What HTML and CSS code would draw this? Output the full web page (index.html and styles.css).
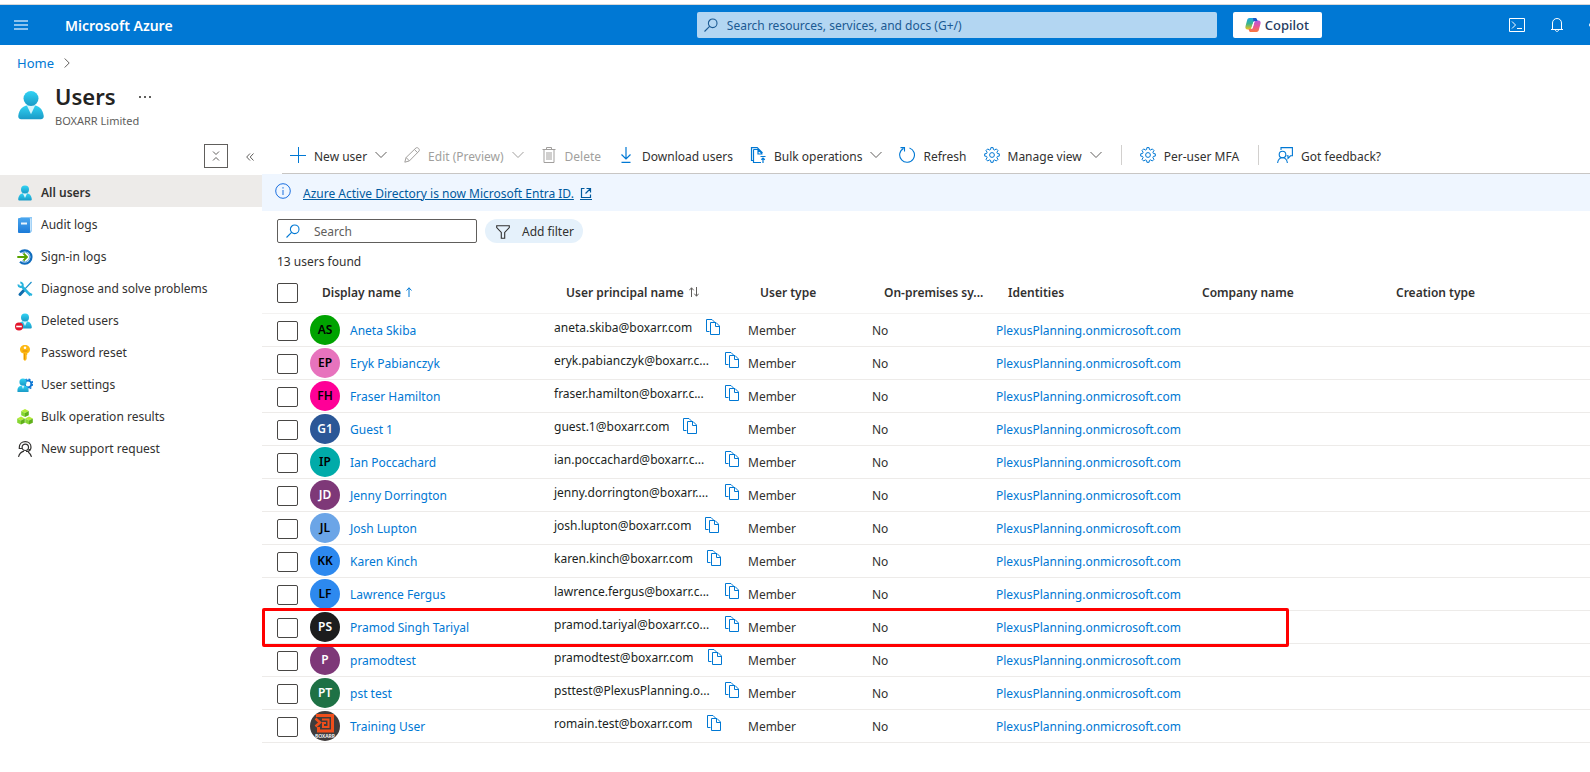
FILE: index.html
```html
<!DOCTYPE html>
<html lang="en">
<head>
    <meta charset="utf-8"/>
    <title>Users - Microsoft Azure</title>
    <link rel="stylesheet" href="styles.css">
</head>
<body>
<!-- shared icons -->
<svg class="defs" width="0" height="0">
    <defs>
        <linearGradient id="g-user" x1="0" y1="0" x2="0" y2="1">
            <stop offset="0" stop-color="#32d4f5"/><stop offset="1" stop-color="#1a9ac6"/>
        </linearGradient>
        <linearGradient id="g-blue" x1="0" y1="0" x2="0" y2="1">
            <stop offset="0" stop-color="#4aa6ee"/><stop offset="1" stop-color="#1b7ad8"/>
        </linearGradient>
        <linearGradient id="g-cop1" x1="0" y1="0" x2="0" y2="1">
            <stop offset="0" stop-color="#16a5e8"/><stop offset="0.5" stop-color="#3bb58a"/><stop offset="1" stop-color="#f4c11b"/>
        </linearGradient>
        <linearGradient id="g-cop2" x1="0" y1="0" x2="0" y2="1">
            <stop offset="0" stop-color="#b159e0"/><stop offset="0.5" stop-color="#e5559b"/><stop offset="1" stop-color="#fb7a3c"/>
        </linearGradient>
    </defs>
    <symbol id="i-user" viewBox="0 0 16 16">
        <path fill="url(#g-user)" d="M2.8 15.6C1.700 15.600 1.100 14.900 1.200 13.900C1.700 10.200 3.500 8 8 8s6.300 2.200 6.800 5.900c.1 1-.5 1.700-1.600 1.700z"/>
        <path fill="#d9f5fc" d="M5.800 8.200L8 12.900l2.200-4.700C8.800 7.800 7.200 7.800 5.800 8.200z"/>
        <circle cx="8" cy="4.500" r="4" fill="url(#g-user)"/>
    </symbol>
    <symbol id="i-chev" viewBox="0 0 12 12">
        <path fill="none" stroke="currentColor" d="M.5 3L6 8.500L11.500 3"/>
    </symbol>
    <symbol id="i-search" viewBox="0 0 16 16">
        <circle cx="9.700" cy="6.300" r="4.300" fill="none" stroke="currentColor" stroke-width="1.100"/>
        <path stroke="currentColor" stroke-width="1.100" d="M6.600 9.400L1.500 14.500"/>
    </symbol>
    <symbol id="i-gear" viewBox="0 0 16 16">
        <path fill="none" stroke="currentColor" stroke-linejoin="round" d="M6.900 .6h2.200l.3 1.900 1.300.5 1.600-1.100 1.700 1.700-1.100 1.600.5 1.300 1.900.3v2.300l-1.900.3-.5 1.300 1.100 1.600-1.700 1.700-1.600-1.100-1.300.5-.3 1.900H6.900l-.3-1.900-1.300-.5L3.700 14 2 12.300l1.100-1.600-.5-1.300L.7 9.100V6.800l1.900-.3.500-1.300L2 3.600l1.700-1.700L5.300 3l1.300-.5z"/>
        <circle cx="8" cy="8" r="2.400" fill="none" stroke="currentColor"/>
    </symbol>
    <symbol id="i-copy" viewBox="0 0 14 16">
        <path fill="none" stroke="currentColor" d="M3.500 12.500H.5V.5h5.500l3 3M4.500 3.500v12h9V7l-3.500-3.500zM9.500 3.500v4h4"/>
    </symbol>
</svg>

<header class="topbar">
    <button class="burger" aria-label="Menu">
        <svg width="14" height="10" viewBox="0 0 14 10"><path stroke="#8cc2ee" stroke-width="2" d="M0 1h14M0 5h14M0 9h14"/></svg>
    </button>
    <a class="brand" href="#">Microsoft Azure</a>
    <label class="topsearch">
        <svg width="16" height="16"><use href="#i-search"/></svg>
        <input type="text" placeholder="Search resources, services, and docs (G+/)" aria-label="Search resources">
    </label>
    <button class="copilot">
        <svg width="16" height="16" viewBox="0 0 16 16">
            <path fill="url(#g-cop1)" d="M4.500 1h5.700c.9 0 1.500.6 1.800 1.600L12.500 4H10c-1 0-1.500.6-1.800 1.500L6.600 11c-.3 1-.9 1.500-1.900 1.500H2.500C.8 12.500 0 11 .5 9.200l1.600-6C2.500 1.800 3.300 1 4.500 1z"/>
            <path fill="url(#g-cop2)" d="M11.500 15H5.800c-.9 0-1.500-.6-1.800-1.600L3.500 12H6c1 0 1.500-.6 1.800-1.500L9.400 5c.3-1 .9-1.500 1.900-1.500h2.200c1.700 0 2.500 1.500 2 3.300l-1.600 6c-.4 1.400-1.200 2.200-2.400 2.200z"/>
            <path fill="#1b55c9" d="M8 1h2.200c.9 0 1.500.6 1.800 1.600l.5 1.400H10c-.8 0-1.200.3-1.500.8z"/>
            <path fill="#fff" d="M8.500 4.800h1L7.700 11c-.1.300-.3.500-.5.500h-1z"/>
        </svg>
        Copilot
    </button>
    <div class="tools">
        <button aria-label="Cloud Shell">
            <svg width="16" height="14" viewBox="0 0 16 14"><path fill="none" stroke="#fff" d="M.5.5h15v13H.5zM3 3.500L6.500 7L3 10.500M8 10.500h5"/></svg>
        </button>
        <button aria-label="Notifications">
            <svg width="12" height="14" viewBox="0 0 12 14"><path fill="none" stroke="#fff" d="M0 11.500h12M1.500 11.500V5C1.500 2.300 3.500.5 6 .5S10.500 2.300 10.500 5v6.500M4.300 11.700C4.500 14 7.500 14 7.700 11.700"/></svg>
        </button>
        <button aria-label="Settings"><svg class="white" width="16" height="16"><use href="#i-gear"/></svg></button>
    </div>
</header>

<nav class="crumbs">
    <a href="#">Home</a>
    <svg width="6" height="10" viewBox="0 0 6 10"><path fill="none" stroke="#605e5c" d="M.7.5L5.200 5L.7 9.500"/></svg>
</nav>

<div class="title">
    <svg width="30" height="30"><use href="#i-user"/></svg>
    <div>
        <h1>Users</h1>
        <p>BOXARR Limited</p>
    </div>
    <button class="more" aria-label="More"><svg width="12" height="2" viewBox="0 0 12 2"><path fill="#605e5c" d="M0 0h2v2H0zM5 0h2v2H5zM10 0h2v2h-2z"/></svg></button>
</div>

<div class="page">
    <aside class="side">
        <div class="side-tools">
            <button class="boxed" aria-label="Collapse all">
                <svg width="8" height="10" viewBox="0 0 8 10"><path fill="none" stroke="#605e5c" d="M1 .5L4 3.500L7 .5M1 9.500L4 6.500L7 9.500"/></svg>
            </button>
            <button aria-label="Hide menu">
                <svg width="8" height="8" viewBox="0 0 8 8"><path fill="none" stroke="#605e5c" d="M4 .5L.7 4L4 7.500M7.500 .5L4.200 4L7.500 7.500"/></svg>
            </button>
        </div>
        <ul>
            <li class="on"><a href="#"><svg width="16" height="16"><use href="#i-user"/></svg>All users</a></li>
            <li><a href="#"><svg width="16" height="16" viewBox="0 0 16 16"><path fill="#8ec8f5" d="M3.500 0H15v14l-1.500 2H3z"/><path fill="#fff" d="M13.500 1.500h.7v12h-.7z"/><rect x="1" y="1" width="12" height="15" rx="1" fill="url(#g-blue)"/><path fill="#e8f4fd" d="M4 5.500h6v2H4z"/></svg>Audit logs</a></li>
            <li><a href="#"><svg width="16" height="16" viewBox="0 0 16 16"><path fill="none" stroke="#0f6cbd" stroke-width="2.200" d="M3 3.300A6.700 6.700 0 1 1 3 12.700"/><path fill="none" stroke="#5ea0d8" stroke-width="1" d="M5 4.200A4.800 4.800 0 1 1 5 11.800"/><path fill="none" stroke="#57a300" stroke-width="1.800" d="M.3 8h9.200M6.500 4.500L10 8l-3.500 3.500"/></svg>Sign-in logs</a></li>
            <li><a href="#"><svg width="16" height="16" viewBox="0 0 16 16"><path fill="none" stroke="#1c8fc9" stroke-width="1.200" d="M14.500 1L8 7.800"/><path fill="none" stroke="#0f6cad" stroke-width="3" stroke-linecap="round" d="M7.200 9L3 13.500"/><path fill="none" stroke="#27b4de" stroke-width="2.600" d="M4.500 5L13.500 14.300"/><path fill="none" stroke="#27b4de" stroke-width="2" d="M1.300 3.500C1.500 6 4.500 6.500 5.500 5S5 1.500 3.300 1.500M12 12.500l3 1.500"/></svg>Diagnose and solve problems</a></li>
            <li><a href="#"><svg width="16" height="16" viewBox="0 0 16 16" overflow="visible"><use href="#i-user" width="16" height="16"/><circle cx="2" cy="13.500" r="4" fill="#e3142b"/><path fill="#fff" d="M-.8 12.700h5.600v1.600H-.8z"/></svg>Deleted users</a></li>
            <li><a href="#"><svg width="16" height="16" viewBox="0 0 16 16"><path fill="#fdb813" d="M8 0c2.900 0 5 1.900 5 4.500 0 2-1.100 3.200-2.800 4V10l-1 .9 1 1-1 1 .8.9L8 16l-1.600-1.500v-6C4.500 8 3 6.700 3 4.500 3 1.900 5.100 0 8 0z"/><circle cx="8" cy="2.800" r="1.300" fill="#fff"/><path fill="#e08a00" d="M5.500 5.500h5v.9h-5zM7.200 8.500h.8v6h-.8z"/></svg>Password reset</a></li>
            <li><a href="#"><svg width="16" height="16" viewBox="0 0 16 16"><circle cx="11" cy="7" r="3.400" fill="none" stroke="#0f78d4" stroke-width="2"/><circle cx="11" cy="7" r="4.800" fill="none" stroke="#0f78d4" stroke-width="1.600" stroke-dasharray="1.900 1.870"/><path fill="url(#g-user)" d="M.5 15C0 11 1.500 8.500 6 8.500s6 2.500 5.500 6.500z"/><path fill="#d9f5fc" d="M4.500 8.600L6 12l1.500-3.400z"/><circle cx="6" cy="5" r="3.600" fill="url(#g-user)"/></svg>User settings</a></li>
            <li><a href="#"><svg width="16" height="16" viewBox="0 0 16 16"><path fill="#b4ec36" d="M8 0l3.800 2L8 4 4.200 2zM4 7.500l3.800 2L4 11.500l-3.800-2zM12 7.500l3.800 2-3.800 2-3.800-2z"/><path fill="#86d633" d="M4.200 2L8 4v4L4.200 6.200zM.2 9.500l3.800 2v4L.2 13.700zM8.200 9.500l3.800 2v4l-3.800-1.800z"/><path fill="#5fb01a" d="M11.800 2L8 4v4l3.800-1.800zM7.800 9.500l-3.800 2v4l3.800-1.800zM15.800 9.500l-3.800 2v4l3.800-1.800z"/></svg>Bulk operation results</a></li>
            <li><a href="#"><svg width="16" height="16" viewBox="0 0 16 16"><g fill="none" stroke="#323130" stroke-width="1.200"><circle cx="8.300" cy="6.300" r="3.200"/><path d="M2.300 8V6.500C2.300 3 5 .7 8.300 .7s5.700 2.300 5.700 5.500c0 2.500-1.500 4.300-5 4.300M1.500 15.800C2.500 12.500 4.500 10.800 7 10.200M14.500 15.800c-.6-2-1.700-3.700-3.300-4.900M2.300 7.500H5M11.500 8.500h2"/></g></svg>New support request</a></li>
        </ul>
    </aside>

    <main class="main">
        <div class="cmdbar">
            <button><svg width="16" height="16" viewBox="0 0 16 16"><path stroke="currentColor" d="M0 8.500h16M8.500 0v16"/></svg>New user<svg class="chev" width="12" height="12"><use href="#i-chev"/></svg></button>
            <button disabled><svg width="16" height="16" viewBox="0 0 16 16"><path fill="none" stroke="currentColor" d="M.8 15.200l1.300-4.700L12 .9c1.700-1 4.100 1.300 3.100 3.100L5.400 13.900zM10.400 2.500l3.200 3.200M2.100 10.500l3.300 3.400"/></svg>Edit (Preview)<svg class="chev" width="12" height="12"><use href="#i-chev"/></svg></button>
            <button disabled><svg width="16" height="16" viewBox="0 0 16 16"><path fill="none" stroke="currentColor" d="M1.500 2.500h13M5.500 2.500v-2h5v2M3 2.500v13h10v-13M6 5v8M8 5v8M10 5v8"/></svg>Delete</button>
            <button><svg width="16" height="16" viewBox="0 0 16 16"><path fill="none" stroke="currentColor" stroke-width="1.200" d="M8 0v12M3.500 7.500L8 12l4.500-4.500M3.500 15.400h9"/></svg>Download users</button>
            <button><svg width="16" height="16" viewBox="0 0 16 16"><path fill="none" stroke="currentColor" stroke-width="1.200" d="M3 13.500H1.500V.6h5.700L12.500 6M3.500 2.500v13h7.500M3.500 2.500H8l4 4M8 2.500v4.500h4.500M10.500 9.500h5M13 16v-5M11.300 12.700L13 11l1.800 1.700"/></svg>Bulk operations<svg class="chev" width="12" height="12"><use href="#i-chev"/></svg></button>
            <button><svg width="16" height="16" viewBox="0 0 16 16"><path fill="none" stroke="currentColor" stroke-width="1.100" d="M10.500 .9A7.400 7.400 0 1 1 4.500 1.400M1.500 .6h4v4"/></svg>Refresh</button>
            <button><svg width="16" height="16"><use href="#i-gear"/></svg>Manage view<svg class="chev" width="12" height="12"><use href="#i-chev"/></svg></button>
            <span class="sep"></span>
            <button><svg width="16" height="16"><use href="#i-gear"/></svg>Per-user MFA</button>
            <span class="sep"></span>
            <button><svg width="16" height="16" viewBox="0 0 16 16"><g fill="none" stroke="currentColor" stroke-width="1.100"><circle cx="5.500" cy="7.500" r="3.300"/><path d="M.6 16c.4-3 2.300-5.200 4.900-5.200S10 13 10.400 16M4 3V.6h11.400v8.200h-1.900l-2.500 2.500V8.800H9.500"/></g></svg>Got feedback?</button>
        </div>

        <div class="banner">
            <svg width="16" height="16" viewBox="0 0 16 16"><circle cx="8" cy="8" r="7.300" fill="none" stroke="#1a6fe0"/><path fill="#1a6fe0" d="M7.500 7h1v5h-1zM7.400 4.200h1.200v1.300H7.400z"/></svg>
            <a href="#">Azure Active Directory is now Microsoft Entra ID.</a>
            <a class="ext" href="#" aria-label="Open"><svg width="12" height="12" viewBox="0 0 12 12"><path fill="none" stroke="currentColor" stroke-width="1.200" d="M4.500 1.500h-3v9h9v-3M6.500 1.500h4v4M10.500 1.500L5.500 6.500"/></svg></a>
        </div>

        <div class="filters">
            <label class="search">
                <svg width="16" height="16"><use href="#i-search"/></svg>
                <input type="text" placeholder="Search" aria-label="Search users">
            </label>
            <button class="pill">
                <svg width="14" height="14" viewBox="0 0 14 14"><path fill="none" stroke="#323130" stroke-width="1.100" d="M.7 .8h12.600v1.700L8.700 7.500v5.700H5.300V7.500L.7 2.500z"/></svg>
                Add filter
            </button>
        </div>

        <p class="count">13 users found</p>

        <table class="users">
            <colgroup>
                <col class="c-check"><col class="c-name"><col class="c-upn"><col class="c-type"><col class="c-sync"><col class="c-ident"><col class="c-comp"><col>
            </colgroup>
            <thead>
                <tr>
                    <th><input type="checkbox" aria-label="Select all"></th>
                    <th>Display name <svg class="asc" width="6" height="10" viewBox="0 0 6 10"><path fill="none" stroke="currentColor" d="M3 10V.8M.5 3.500L3 .8L5.500 3.500"/></svg></th>
                    <th>User principal name <svg width="10" height="10" viewBox="0 0 10 10"><path fill="none" stroke="currentColor" d="M2.500 10V.8M.3 3.300L2.500 .8L4.700 3.300M7.500 0v9.200M5.300 6.700L7.500 9.200L9.700 6.700"/></svg></th>
                    <th>User type</th>
                    <th>On-premises sy...</th>
                    <th>Identities</th>
                    <th>Company name</th>
                    <th>Creation type</th>
                </tr>
            </thead>
            <tbody>
                <tr>
                    <td><input type="checkbox" aria-label="Aneta Skiba"></td>
                    <td><div class="who"><span class="av green">AS</span><a href="#">Aneta Skiba</a></div></td>
                    <td><div class="upn"><span>aneta.skiba@boxarr.com</span><button aria-label="Copy"><svg width="14" height="16"><use href="#i-copy"/></svg></button></div></td>
                    <td>Member</td><td>No</td><td><a href="#">PlexusPlanning.onmicrosoft.com</a></td><td></td><td></td>
                </tr>
                <tr>
                    <td><input type="checkbox" aria-label="Eryk Pabianczyk"></td>
                    <td><div class="who"><span class="av pink">EP</span><a href="#">Eryk Pabianczyk</a></div></td>
                    <td><div class="upn cut"><span>eryk.pabianczyk@boxarr.c...</span><button aria-label="Copy"><svg width="14" height="16"><use href="#i-copy"/></svg></button></div></td>
                    <td>Member</td><td>No</td><td><a href="#">PlexusPlanning.onmicrosoft.com</a></td><td></td><td></td>
                </tr>
                <tr>
                    <td><input type="checkbox" aria-label="Fraser Hamilton"></td>
                    <td><div class="who"><span class="av magenta">FH</span><a href="#">Fraser Hamilton</a></div></td>
                    <td><div class="upn cut"><span>fraser.hamilton@boxarr.c...</span><button aria-label="Copy"><svg width="14" height="16"><use href="#i-copy"/></svg></button></div></td>
                    <td>Member</td><td>No</td><td><a href="#">PlexusPlanning.onmicrosoft.com</a></td><td></td><td></td>
                </tr>
                <tr>
                    <td><input type="checkbox" aria-label="Guest 1"></td>
                    <td><div class="who"><span class="av navy">G1</span><a href="#">Guest 1</a></div></td>
                    <td><div class="upn"><span>guest.1@boxarr.com</span><button aria-label="Copy"><svg width="14" height="16"><use href="#i-copy"/></svg></button></div></td>
                    <td>Member</td><td>No</td><td><a href="#">PlexusPlanning.onmicrosoft.com</a></td><td></td><td></td>
                </tr>
                <tr>
                    <td><input type="checkbox" aria-label="Ian Poccachard"></td>
                    <td><div class="who"><span class="av teal">IP</span><a href="#">Ian Poccachard</a></div></td>
                    <td><div class="upn cut"><span>ian.poccachard@boxarr.c...</span><button aria-label="Copy"><svg width="14" height="16"><use href="#i-copy"/></svg></button></div></td>
                    <td>Member</td><td>No</td><td><a href="#">PlexusPlanning.onmicrosoft.com</a></td><td></td><td></td>
                </tr>
                <tr>
                    <td><input type="checkbox" aria-label="Jenny Dorrington"></td>
                    <td><div class="who"><span class="av purple">JD</span><a href="#">Jenny Dorrington</a></div></td>
                    <td><div class="upn cut"><span>jenny.dorrington@boxarr....</span><button aria-label="Copy"><svg width="14" height="16"><use href="#i-copy"/></svg></button></div></td>
                    <td>Member</td><td>No</td><td><a href="#">PlexusPlanning.onmicrosoft.com</a></td><td></td><td></td>
                </tr>
                <tr>
                    <td><input type="checkbox" aria-label="Josh Lupton"></td>
                    <td><div class="who"><span class="av sky">JL</span><a href="#">Josh Lupton</a></div></td>
                    <td><div class="upn"><span>josh.lupton@boxarr.com</span><button aria-label="Copy"><svg width="14" height="16"><use href="#i-copy"/></svg></button></div></td>
                    <td>Member</td><td>No</td><td><a href="#">PlexusPlanning.onmicrosoft.com</a></td><td></td><td></td>
                </tr>
                <tr>
                    <td><input type="checkbox" aria-label="Karen Kinch"></td>
                    <td><div class="who"><span class="av blue">KK</span><a href="#">Karen Kinch</a></div></td>
                    <td><div class="upn"><span>karen.kinch@boxarr.com</span><button aria-label="Copy"><svg width="14" height="16"><use href="#i-copy"/></svg></button></div></td>
                    <td>Member</td><td>No</td><td><a href="#">PlexusPlanning.onmicrosoft.com</a></td><td></td><td></td>
                </tr>
                <tr>
                    <td><input type="checkbox" aria-label="Lawrence Fergus"></td>
                    <td><div class="who"><span class="av blue">LF</span><a href="#">Lawrence Fergus</a></div></td>
                    <td><div class="upn cut"><span>lawrence.fergus@boxarr.c...</span><button aria-label="Copy"><svg width="14" height="16"><use href="#i-copy"/></svg></button></div></td>
                    <td>Member</td><td>No</td><td><a href="#">PlexusPlanning.onmicrosoft.com</a></td><td></td><td></td>
                </tr>
                <tr class="marked">
                    <td><input type="checkbox" aria-label="Pramod Singh Tariyal"></td>
                    <td><div class="who"><span class="av black">PS</span><a href="#">Pramod Singh Tariyal</a></div></td>
                    <td><div class="upn cut"><span>pramod.tariyal@boxarr.co...</span><button aria-label="Copy"><svg width="14" height="16"><use href="#i-copy"/></svg></button></div></td>
                    <td>Member</td><td>No</td><td><a href="#">PlexusPlanning.onmicrosoft.com</a></td><td></td><td></td>
                </tr>
                <tr>
                    <td><input type="checkbox" aria-label="pramodtest"></td>
                    <td><div class="who"><span class="av purple">P</span><a href="#">pramodtest</a></div></td>
                    <td><div class="upn"><span>pramodtest@boxarr.com</span><button aria-label="Copy"><svg width="14" height="16"><use href="#i-copy"/></svg></button></div></td>
                    <td>Member</td><td>No</td><td><a href="#">PlexusPlanning.onmicrosoft.com</a></td><td></td><td></td>
                </tr>
                <tr>
                    <td><input type="checkbox" aria-label="pst test"></td>
                    <td><div class="who"><span class="av forest">PT</span><a href="#">pst test</a></div></td>
                    <td><div class="upn cut"><span>psttest@PlexusPlanning.o...</span><button aria-label="Copy"><svg width="14" height="16"><use href="#i-copy"/></svg></button></div></td>
                    <td>Member</td><td>No</td><td><a href="#">PlexusPlanning.onmicrosoft.com</a></td><td></td><td></td>
                </tr>
                <tr>
                    <td><input type="checkbox" aria-label="Training User"></td>
                    <td><div class="who"><span class="av logo"><svg width="30" height="30" viewBox="0 0 30 30"><rect width="30" height="30" fill="#403c3c"/><g fill="none" stroke="#f04e1b" stroke-width="3"><path d="M6 4.500h16.500v15.500H8.500V16"/><path stroke-width="2" d="M12 8.500h6.500v7.500H13V12h3"/><path stroke-width="2.500" d="M5.500 7.500l4.500 4-4.500 4"/></g><text x="15" y="27" text-anchor="middle">BOXARR</text></svg></span><a href="#">Training User</a></div></td>
                    <td><div class="upn"><span>romain.test@boxarr.com</span><button aria-label="Copy"><svg width="14" height="16"><use href="#i-copy"/></svg></button></div></td>
                    <td>Member</td><td>No</td><td><a href="#">PlexusPlanning.onmicrosoft.com</a></td><td></td><td></td>
                </tr>
            </tbody>
        </table>
    </main>
</div>
</body>
</html>
```
FILE: styles.css
```css
* {
	box-sizing: border-box;
}
body {
	margin: 0;
	padding-top: 4px;
	background: #fff;
	color: #323130;
	font: 12px/16px "Noto Sans", "Open Sans", sans-serif;
	overflow-x: hidden;
}
button, input {
	font: inherit;
	color: inherit;
}
button {
	border: 0;
	padding: 0;
	background: none;
}
svg {
	display: block;
	flex: none;
}
a {
	color: #0078d4;
	text-decoration: none;
}
h1, p, ul {
	margin: 0;
	padding: 0;
}
.defs {
	position: absolute;
}

/* top bar */
.topbar {
	display: flex;
	align-items: center;
	height: 41px;
	border-top: 1px solid #d8d8d8;
	background: #0078d4;
}
.burger {
	padding: 0 14px;
}
.brand {
	margin: 0 auto 0 23px;
	padding-top: 1px;
	color: #fff;
	font-size: 14px;
	font-weight: 600;
}
.topsearch {
	display: flex;
	align-items: center;
	gap: 8px;
	width: 520px;
	height: 26px;
	padding: 0 6px;
	border-radius: 2px;
	background: #b3d6f2;
	color: #1b5a93;
}
.topsearch input, .search input {
	flex: 1;
	min-width: 0;
	padding: 2px 0 0;
	border: 0;
	outline: 0;
	background: none;
}
.topsearch input::placeholder {
	color: #1b5a93;
}
.copilot {
	display: flex;
	align-items: center;
	gap: 4px;
	height: 26px;
	margin-left: 16px;
	padding: 0 13px 0 12px;
	border-radius: 2px;
	background: #fff;
	color: #243a5e;
	font-size: 13px;
	font-weight: 500;
}
.tools {
	display: flex;
	margin: 0 -27px 0 175px;
}
.tools button {
	display: flex;
	align-items: center;
	justify-content: center;
	width: 40px;
}
.white {
	color: #fff;
}

/* title */
.crumbs {
	display: flex;
	align-items: center;
	gap: 10px;
	padding: 10px 17px 0;
	font-size: 13px;
}
.title {
	display: flex;
	padding: 12px 16px 0;
}
.title > svg {
	margin-top: 7px;
}
.title > div {
	margin-left: 9px;
}
h1 {
	color: #242322;
	font-size: 22px;
	line-height: 26px;
	font-weight: 600;
}
.title p {
	padding-top: 4px;
	color: #605e5c;
	font-size: 11px;
}
.more {
	align-self: flex-start;
	margin-top: 13px;
}

/* layout */
.page {
	display: flex;
	margin-top: 10px;
}
.side {
	flex: none;
	width: 262px;
}
.side-tools {
	display: flex;
	align-items: center;
	justify-content: flex-end;
	gap: 18px;
	height: 36px;
	padding: 0 8px 2px 0;
}
.side-tools button {
	padding-top: 2px;
}
.side-tools .boxed {
	display: flex;
	align-items: center;
	justify-content: center;
	width: 24px;
	height: 24px;
	padding: 0;
	border: 1px solid #605e5c;
}
.side ul {
	list-style: none;
}
.side li a {
	display: flex;
	align-items: center;
	gap: 8px;
	height: 32px;
	padding: 3px 0 0 17px;
	color: #323130;
}
.side .on a {
	background: #edebe9;
	font-weight: 600;
}
.main {
	flex: 1;
	min-width: 0;
}

/* command bar */
.cmdbar {
	display: flex;
	align-items: flex-start;
	height: 35px;
	margin-left: 20px;
	padding-top: 6px;
	border-bottom: 1px solid #c8c6c4;
	line-height: 20px;
	white-space: nowrap;
}
.cmdbar button {
	display: flex;
	align-items: flex-start;
	gap: 8px;
	padding: 2px 9px 0 8px;
}
.cmdbar button > svg {
	color: #0078d4;
}
.cmdbar button > .chev {
	margin-top: 2px;
	color: #605e5c;
}
.cmdbar button:disabled,
.cmdbar button:disabled > svg {
	color: #a19f9d;
}
.sep {
	width: 1px;
	height: 20px;
	margin: 0 10px;
	background: #d2d0ce;
}

.banner {
	display: flex;
	align-items: center;
	height: 37px;
	padding: 2px 0 0 13px;
	background: #eff6ff;
}
.banner > svg {
	margin-bottom: 6px;
}
.banner a {
	margin-left: 12px;
	color: #005a9e;
	text-decoration: underline;
}
.banner .ext {
	margin-left: 6px;
	border-bottom: 1px solid #005a9e;
}

.filters {
	display: flex;
	gap: 8px;
	padding: 8px 15px 0;
}
.search {
	display: flex;
	align-items: center;
	gap: 13px;
	width: 200px;
	height: 24px;
	padding: 0 7px;
	border: 1px solid #605e5c;
	border-radius: 2px;
}
.search svg {
	color: #0078d4;
}
.search input::placeholder {
	color: #605e5c;
}
.pill {
	display: flex;
	align-items: center;
	gap: 12px;
	height: 24px;
	padding: 1px 9px 0 11px;
	border-radius: 12px;
	background: #e5f1fb;
}
.count {
	padding: 11px 15px 0;
}

/* users table */
.users {
	width: 100%;
	border-collapse: collapse;
	table-layout: fixed;
	white-space: nowrap;
}
.c-check { width: 40px; }
.c-name { width: 244px; }
.c-upn { width: 194px; }
.c-type { width: 124px; }
.c-sync { width: 124px; }
.c-ident { width: 194px; }
.c-comp { width: 194px; }
.users th {
	height: 43px;
	padding: 3px 0 0 20px;
	border-bottom: 1px solid #f3f2f1;
	font-weight: 600;
	text-align: left;
}
.users th svg {
	display: inline-block;
	margin-left: 2px;
	color: #605e5c;
}
.users th .asc {
	color: #0078d4;
}
.users td {
	height: 33px;
	padding: 3px 0 0 8px;
	border-bottom: 1px solid #edebe9;
}
.users th:first-child, .users td:first-child {
	padding-left: 15px;
}
.users td:first-child, .users td:nth-child(3) {
	padding-top: 0;
}
.users td:nth-child(2) {
	padding-top: 1px;
}
.users input {
	display: block;
	appearance: none;
	width: 21px;
	height: 20px;
	margin: 0;
	border: 1px solid #484644;
	border-radius: 2px;
	background: #fff;
}
.users td input {
	margin-top: 2px;
}
.who {
	display: flex;
	align-items: center;
	gap: 10px;
}
.who a {
	padding-top: 2px;
}
.av {
	width: 30px;
	height: 30px;
	border-radius: 50%;
	color: #fff;
	font-weight: 600;
	line-height: 30px;
	text-align: center;
	overflow: hidden;
}
.green { background: #00a300; color: #000; }
.pink { background: #e773bd; color: #000; }
.magenta { background: #ff0097; color: #000; }
.navy { background: #2b5797; }
.teal { background: #00aba9; color: #000; }
.purple { background: #7e3878; }
.sky { background: #6ba5e7; color: #000; }
.blue { background: #2d89ef; color: #000; }
.black { background: #1d1d1d; }
.forest { background: #1e7145; }
.logo text {
	fill: #fff;
	font-size: 5px;
}
.upn {
	display: flex;
	align-items: center;
	gap: 14px;
	margin-bottom: 5px;
	color: #201f1e;
}
.upn svg {
	color: #0078d4;
}
.upn span {
	padding-top: 2px;
}
.cut span {
	width: 157px;
}
.marked {
	position: relative;
}
/* red frame over the row */
.marked td:first-child::after {
	content: "";
	box-sizing: border-box;
	position: absolute;
	top: -2px;
	left: 0;
	width: 1027px;
	height: 39px;
	border: 3px solid #f00;
	border-radius: 2px;
}
```
